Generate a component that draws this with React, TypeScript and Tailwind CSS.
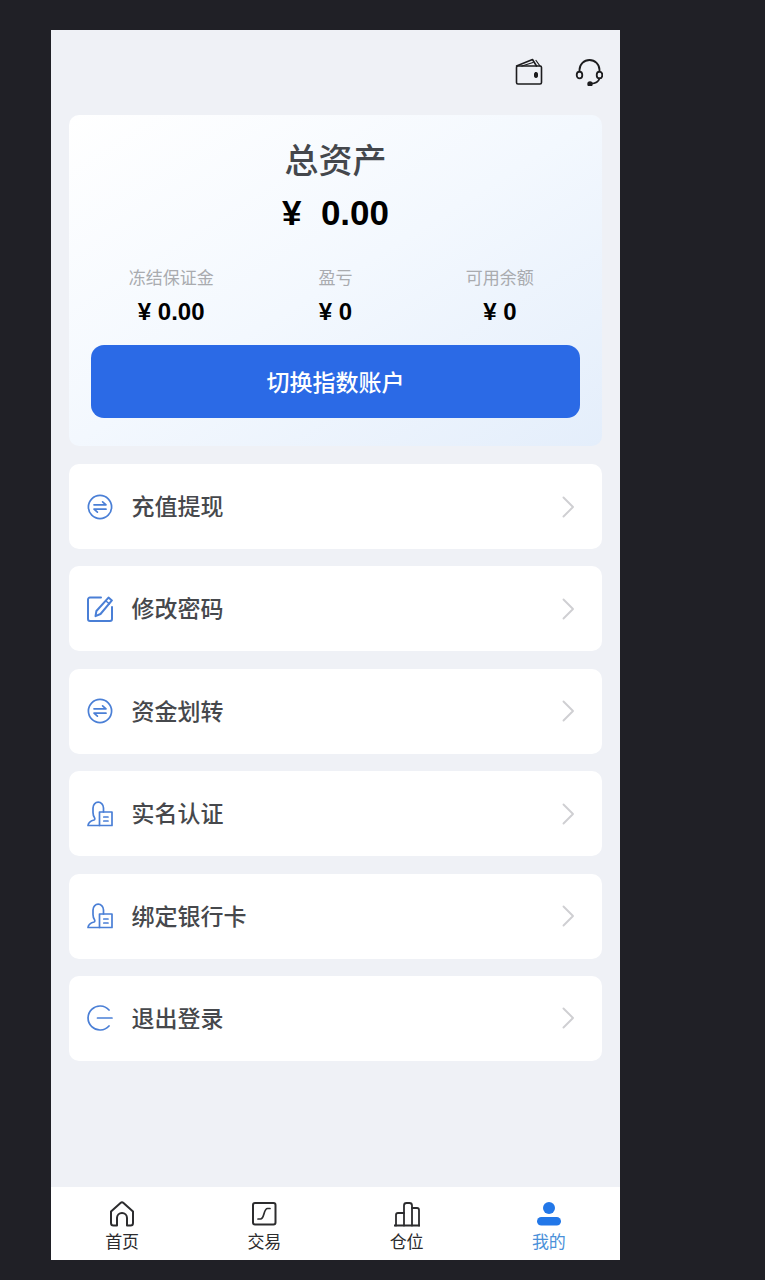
import React from "react";

const font = { fontFamily: '"Noto Sans CJK SC", sans-serif' };
const latin = { fontFamily: '"Liberation Sans", "Noto Sans CJK SC", sans-serif' };

function Exchange() {
  return (
    <svg width="26" height="26" viewBox="0 0 26 26" fill="none" stroke="#4a7fd6" strokeWidth="1.7">
      <circle cx="13" cy="13" r="11.600" />
      <path d="M7 10.800h12l-3.400-3" strokeLinecap="round" strokeLinejoin="round" />
      <path d="M19 15.200H7l3.400 3" strokeLinecap="round" strokeLinejoin="round" />
    </svg>
  );
}
function Edit() {
  return (
    <svg width="26" height="26" viewBox="0 0 26 26" fill="none" stroke="#4a7fd6" strokeWidth="2" strokeLinejoin="round" strokeLinecap="round">
      <path d="M14 1.500H3a2 2 0 0 0-2 2v19.500a2 2 0 0 0 2 2h20a2 2 0 0 0 2-2V11" />
      <path d="M21.500 1.600l3.400 2.800L13.500 18l-5 2.200.9-5.200z" />
      <path d="M19 5l3.400 2.800" strokeWidth="1.500" />
    </svg>
  );
}
function Person() {
  return (
    <svg width="26" height="26" viewBox="0 0 26 26" fill="none" stroke="#4a7fd6" strokeWidth="1.700" strokeLinejoin="round" strokeLinecap="round">
      <path d="M12.500 24.500H1c.2-3 2.500-4.500 6-5.500.9-.4 1-1.300.6-2.100-.9-1.400-1.600-3-1.600-5.400V7c0-3.400 2.400-5.800 5.200-5.800S16.500 3.600 16.500 7v4" />
      <path d="M12.500 11h12.500v13.500H12.500z" />
      <path d="M16.800 16h4.200M16.800 20h4.200" />
    </svg>
  );
}
function Logout() {
  return (
    <svg width="26" height="26" viewBox="0 0 26 26" fill="none" stroke="#4a7fd6" strokeWidth="1.700" strokeLinecap="round">
      <path d="M22 5A12 12 0 1 0 22 21" />
      <path d="M10.500 13H25" />
    </svg>
  );
}
function Chevron() {
  return (
    <svg width="13" height="24" viewBox="0 0 13 24" fill="none" stroke="#cfcfd2" strokeWidth="1.900" strokeLinecap="round" strokeLinejoin="round">
      <path d="M1.500 2.500l9.500 9.500-9.500 9.500" />
    </svg>
  );
}

function Row({ icon, label }: { icon: React.ReactNode; label: string }) {
  return (
    <div className="flex h-[85px] items-center rounded-[10px] bg-white pl-[18px] pr-[27px]">
      <span className="flex w-[26px] shrink-0">{icon}</span>
      <span className="ml-[18.500px] flex-1 pb-[2px] text-[23px] font-medium leading-none text-[#46484c]">{label}</span>
      <Chevron />
    </div>
  );
}

function Stat({ label, value }: { label: string; value: string }) {
  return (
    <div className="flex flex-col items-center">
      <span className="text-[17px] leading-[24px] text-[#a9abaf]">{label}</span>
      <span className="mt-[10px] text-[24px] font-bold leading-[26px] text-black" style={latin}>{value}</span>
    </div>
  );
}

function Tab({ icon, label, active }: { icon: React.ReactNode; label: string; active?: boolean }) {
  return (
    <div className="flex flex-1 flex-col items-center">
      <span className="flex h-[26px] items-center justify-center">{icon}</span>
      <span className={`mt-[4px] text-[17px] leading-[20px] ${active ? "text-[#4a90d9]" : "text-[#2c2c2e]"}`}>{label}</span>
    </div>
  );
}

export default function App() {
  return (
    <div className="h-[1280px] bg-[#202026] pl-[51px] pt-[30px]" style={font}>
      <div className="flex h-[1230px] w-[569px] flex-col bg-[#eff1f6]">
        <div className="flex h-[85px] shrink-0 items-start justify-end gap-[32px] pr-[17px] pt-[28px]">
          <svg width="28" height="28" viewBox="0 0 28 28" fill="none" stroke="#1c1c1e" strokeWidth="1.600" strokeLinejoin="round" strokeLinecap="round">
            <rect x="1.500" y="8" width="25" height="18" rx="1.500" />
            <path d="M1.500 8L17.500 1.500 21.500 8" />
            <path d="M7 8l11-3.500" strokeWidth="1.300" />
            <path d="M21 2.500l4 5.500" strokeWidth="1.200" />
            <rect x="19.500" y="14.500" width="3" height="5" rx="1.200" fill="#1c1c1e" strokeWidth="1" />
          </svg>
          <svg width="28" height="28" viewBox="0 0 28 28" fill="none" stroke="#1c1c1e" strokeWidth="1.800" strokeLinecap="round">
            <path d="M4.500 13.500V12a10 10 0 0 1 20 0v1.500" />
            <ellipse cx="4.500" cy="17" rx="2.800" ry="3.400" />
            <ellipse cx="24.500" cy="17" rx="2.800" ry="3.400" />
            <path d="M24.500 20.500c-1 3-4 5-8.500 5.200" />
            <circle cx="15" cy="26" r="1.800" fill="#1c1c1e" />
          </svg>
        </div>

        <div className="mx-[18px] flex h-[331px] shrink-0 flex-col rounded-[10px] bg-gradient-to-br from-[#ffffff] via-[#f3f8fe] to-[#e4eefb] px-[22px] pt-[24px]">
          <div className="text-center text-[34px] font-medium leading-[40px] text-[#44474c]">总资产</div>
          <div className="mt-[14px] whitespace-pre text-center text-[35px] font-bold leading-[40px] text-black" style={latin}>¥  0.00</div>
          <div className="-mx-[2px] mt-[32px] grid grid-cols-3">
            <Stat label="冻结保证金" value="¥ 0.00" />
            <Stat label="盈亏" value="¥ 0" />
            <Stat label="可用余额" value="¥ 0" />
          </div>
          <div className="mt-[20px] flex h-[73px] items-center justify-center rounded-[13px] bg-[#2b6ae6] text-[23px] font-medium text-white">
            切换指数账户
          </div>
        </div>

        <div className="mx-[18px] mt-[18px] flex flex-col gap-[17.400px]">
          <Row icon={<Exchange />} label="充值提现" />
          <Row icon={<Edit />} label="修改密码" />
          <Row icon={<Exchange />} label="资金划转" />
          <Row icon={<Person />} label="实名认证" />
          <Row icon={<Person />} label="绑定银行卡" />
          <Row icon={<Logout />} label="退出登录" />
        </div>

        <div className="mt-auto flex h-[73px] shrink-0 bg-white pt-[14px]">
          <Tab label="首页" icon={
            <svg width="26" height="26" viewBox="0 0 26 26" fill="none" stroke="#2c2c2e" strokeWidth="2" strokeLinejoin="round">
              <path d="M2 10.500L11.500 2a2.200 2.200 0 0 1 3 0L24 10.500V22a2.500 2.500 0 0 1-2.500 2.500H18V17a5 5 0 0 0-10 0v7.500H4.500A2.500 2.500 0 0 1 2 22z" />
            </svg>
          } />
          <Tab label="交易" icon={
            <svg width="26" height="26" viewBox="0 0 26 26" fill="none" stroke="#2c2c2e" strokeWidth="2" strokeLinecap="round">
              <rect x="2" y="2" width="22.500" height="21.500" rx="2" />
              <path d="M7 18h2.500c4 0 3-10.500 7-10.500h2.500" strokeWidth="1.700" />
            </svg>
          } />
          <Tab label="仓位" icon={
            <svg width="26" height="26" viewBox="0 0 26 26" fill="none" stroke="#2c2c2e" strokeWidth="1.800" strokeLinejoin="round" strokeLinecap="round">
              <path d="M0 24.500h26" />
              <path d="M2 24.500V14a2 2 0 0 1 2-2h6" />
              <path d="M10 24.500V4.500a2.500 2.500 0 0 1 2.500-2.500h3A2.500 2.500 0 0 1 18 4.500v20" />
              <path d="M18 7h5a2 2 0 0 1 2 2v15.500" />
            </svg>
          } />
          <Tab active label="我的" icon={
            <svg width="26" height="26" viewBox="0 0 26 26" fill="#2277e8">
              <circle cx="13" cy="7" r="6" />
              <rect x="1" y="16" width="24" height="8.500" rx="4.250" />
            </svg>
          } />
        </div>
      </div>
    </div>
  );
}
